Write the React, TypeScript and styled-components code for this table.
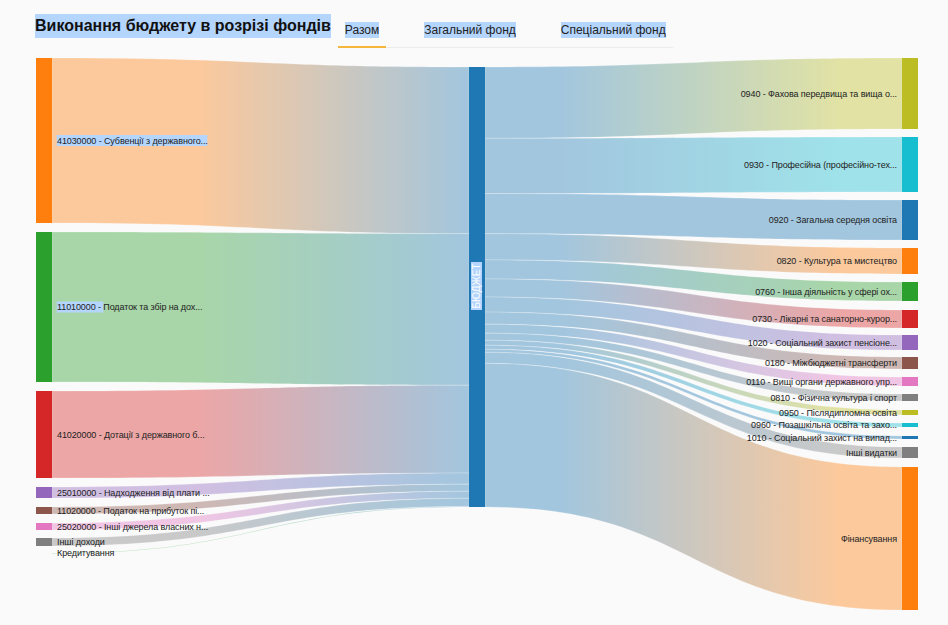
import React from "react";
import styled, { createGlobalStyle } from "styled-components";

const GlobalStyle = createGlobalStyle`
  html, body { margin: 0; padding: 0; background: #fafafa; }
  body { font-family: "Liberation Sans", Arial, sans-serif; color: #222; }
`;

const HL = "#b4d5fe";
const BG = 250;

const Page = styled.div`
  width: 948px;
  height: 625px;
  overflow: hidden;
  background: #fafafa;
  display: flex;
  flex-direction: column;
`;

const Header = styled.header`
  display: flex;
  align-items: flex-start;
  height: 52px;
  box-sizing: border-box;
  padding: 14px 0 0 35px;
`;

const Title = styled.h1`
  margin: 0;
  font-size: 16px;
  font-weight: 700;
  line-height: 24px;
  color: #111;
  background: ${HL};
`;

const Tabs = styled.nav`
  display: flex;
  gap: 31px;
  margin: 8px 0 0 7px;
  border-bottom: 1px solid #ececec;
`;

const Tab = styled.div<{ $active?: boolean }>`
  height: 24px;
  padding: 0 7px;
  margin-bottom: -1px;
  border-bottom: 2px solid ${(p) => (p.$active ? "#f5b73b" : "transparent")};
  display: flex;
  align-items: flex-start;
`;

const TabText = styled.span`
  font-size: 12px;
  line-height: 16px;
  color: #222;
  background: ${HL};
`;

const Chart = styled.svg`
  display: block;
  width: 948px;
  height: 573px;
`;

const NodeRect = styled.rect``;

const Label = styled.text`
  font-family: "Liberation Sans", Arial, sans-serif;
  font-size: 9px;
  letter-spacing: -0.1px;
  fill: #222;
`;

const NodeTitle = styled.text`
  font-family: "Liberation Sans", Arial, sans-serif;
  font-size: 10px;
  fill: #ffffff;
`;

const Highlight = styled.rect`
  fill: ${HL};
`;

const LinkPath = styled.path`
  stroke: #ffffff;
  stroke-opacity: 0.35;
  stroke-width: 0.6;
`;

const C = {
  blue: "#1f77b4",
  orange: "#ff7f0e",
  green: "#2ca02c",
  red: "#d62728",
  purple: "#9467bd",
  brown: "#8c564b",
  pink: "#e377c2",
  gray: "#7f7f7f",
  olive: "#bcbd22",
  cyan: "#17becf",
};

type Node = { label: string; y0: number; y1: number; color: string; hidden?: boolean };

const leftNodes: Node[] = [
  { label: "41030000 - Субвенції з державного...", y0: 58, y1: 223, color: C.orange },
  { label: "11010000 - Податок та збір на дох...", y0: 232, y1: 382, color: C.green },
  { label: "41020000 - Дотації з державного б...", y0: 391, y1: 478, color: C.red },
  { label: "25010000 - Надходження від плати ...", y0: 487, y1: 498, color: C.purple },
  { label: "11020000 - Податок на прибуток пі...", y0: 507, y1: 514, color: C.brown },
  { label: "25020000 - Інші джерела власних н...", y0: 523, y1: 530, color: C.pink },
  { label: "Інші доходи", y0: 538, y1: 546, color: C.gray },
  { label: "Кредитування", y0: 553, y1: 553.6, color: C.green, hidden: true },
];

const rightNodes: Node[] = [
  { label: "0940 - Фахова передвища та вища о...", y0: 58, y1: 129, color: C.olive },
  { label: "0930 - Професійна (професійно-тех...", y0: 137, y1: 192, color: C.cyan },
  { label: "0920 - Загальна середня освіта", y0: 200, y1: 240, color: C.blue },
  { label: "0820 - Культура та мистецтво", y0: 248, y1: 274, color: C.orange },
  { label: "0760 - Інша діяльність у сфері ох...", y0: 282, y1: 301, color: C.green },
  { label: "0730 - Лікарні та санаторно-курор...", y0: 310, y1: 328, color: C.red },
  { label: "1020 - Соціальний захист пенсіоне...", y0: 335, y1: 350, color: C.purple },
  { label: "0180 - Міжбюджетні трансферти", y0: 357, y1: 369, color: C.brown },
  { label: "0110 - Вищі органи державного упр...", y0: 377, y1: 386, color: C.pink },
  { label: "0810 - Фізична культура і спорт", y0: 394, y1: 401, color: C.gray },
  { label: "0950 - Післядипломна освіта", y0: 410, y1: 415, color: C.olive },
  { label: "0960 - Позашкільна освіта та захо...", y0: 423, y1: 427, color: C.cyan },
  { label: "1010 - Соціальний захист на випад...", y0: 436, y1: 439, color: C.blue },
  { label: "Інші видатки", y0: 447, y1: 458, color: C.gray },
  { label: "Фінансування", y0: 467, y1: 610, color: C.orange },
];

const LX0 = 36;
const LX1 = 52;
const MX0 = 469;
const MX1 = 485;
const RX0 = 902;
const RX1 = 918;
const MY0 = 67;
const MY1 = 507;

function light(hex: string) {
  const n = parseInt(hex.slice(1), 16);
  const r = (n >> 16) & 255;
  const g = (n >> 8) & 255;
  const b = n & 255;
  const m = (v: number) => Math.round(v * 0.4 + BG * 0.6);
  return `rgb(${m(r)},${m(g)},${m(b)})`;
}

function linkPath(x0: number, s0: number, s1: number, x1: number, t0: number, t1: number) {
  const xm = (x0 + x1) / 2;
  return `M${x0},${s0} C${xm},${s0} ${xm},${t0} ${x1},${t0} L${x1},${t1} C${xm},${t1} ${xm},${s1} ${x0},${s1} Z`;
}

type Link = { id: string; d: string; x0: number; x1: number; from: string; to: string; o0: number; o1: number };

function buildLinks(): Link[] {
  const links: Link[] = [];
  const sumL = leftNodes.reduce((a, n) => a + (n.y1 - n.y0), 0);
  const kL = (MY1 - MY0) / sumL;
  let cur = MY0;
  leftNodes.forEach((n, i) => {
    const h = (n.y1 - n.y0) * kL;
    links.push({
      id: `gl${i}`,
      d: linkPath(LX1, n.y0, n.y1, MX0, cur, cur + h),
      x0: LX1,
      x1: MX0,
      from: light(n.color),
      to: light(C.blue),
      o0: 0.35,
      o1: 1,
    });
    cur += h;
  });
  const sumR = rightNodes.reduce((a, n) => a + (n.y1 - n.y0), 0);
  const kR = (MY1 - MY0) / sumR;
  cur = MY0;
  rightNodes.forEach((n, i) => {
    const h = (n.y1 - n.y0) * kR;
    links.push({
      id: `gr${i}`,
      d: linkPath(MX1, cur, cur + h, RX0, n.y0, n.y1),
      x0: MX1,
      x1: RX0,
      from: light(C.blue),
      to: light(n.color),
      o0: 0.18,
      o1: 0.85,
    });
    cur += h;
  });
  return links;
}

const links = buildLinks();

function SankeyChart() {
  return (
    <Chart viewBox="0 52 948 573" width={948} height={573}>
      <defs>
        {links.map((l) => (
          <linearGradient key={l.id} id={l.id} gradientUnits="userSpaceOnUse" x1={l.x0} x2={l.x1} y1={0} y2={0}>
            <stop offset={l.o0} stopColor={l.from} />
            <stop offset={l.o1} stopColor={l.to} />
          </linearGradient>
        ))}
      </defs>
      <g>
        {links.map((l) => (
          <LinkPath key={l.id} d={l.d} fill={`url(#${l.id})`} />
        ))}
      </g>
      <g>
        {leftNodes
          .filter((n) => !n.hidden)
          .map((n, i) => (
            <NodeRect key={`ln${i}`} x={LX0} y={n.y0} width={LX1 - LX0} height={n.y1 - n.y0} fill={n.color} />
          ))}
        {rightNodes.map((n, i) => (
          <NodeRect key={`rn${i}`} x={RX0} y={n.y0} width={RX1 - RX0} height={n.y1 - n.y0} fill={n.color} />
        ))}
        <NodeRect x={MX0} y={MY0} width={MX1 - MX0} height={MY1 - MY0} fill={C.blue} />
      </g>
      <g>
        <Highlight x={56.7} y={135} width={150.6} height={11} />
        <Highlight x={56.7} y={301.5} width={46.6} height={11} />
        {leftNodes.map((n, i) => (
          <Label key={`ll${i}`} x={LX1 + 5} y={(n.y0 + n.y1) / 2} dy="0.35em">
            {n.label}
          </Label>
        ))}
        {rightNodes.map((n, i) => (
          <Label key={`rl${i}`} x={RX0 - 5} y={(n.y0 + n.y1) / 2} dy="0.35em" textAnchor="end">
            {n.label}
          </Label>
        ))}
        <Highlight x={471} y={262} width={11} height={48} />
        <NodeTitle x={0} y={0} dy="0.35em" textAnchor="middle" transform="translate(476.5,286) rotate(-90)">
          БЮДЖЕТ
        </NodeTitle>
      </g>
    </Chart>
  );
}

export default function App() {
  return (
    <Page>
      <GlobalStyle />
      <Header>
        <Title>Виконання бюджету в розрізі фондів</Title>
        <Tabs>
          <Tab $active>
            <TabText>Разом</TabText>
          </Tab>
          <Tab>
            <TabText>Загальний фонд</TabText>
          </Tab>
          <Tab>
            <TabText>Спеціальний фонд</TabText>
          </Tab>
        </Tabs>
      </Header>
      <SankeyChart />
    </Page>
  );
}
